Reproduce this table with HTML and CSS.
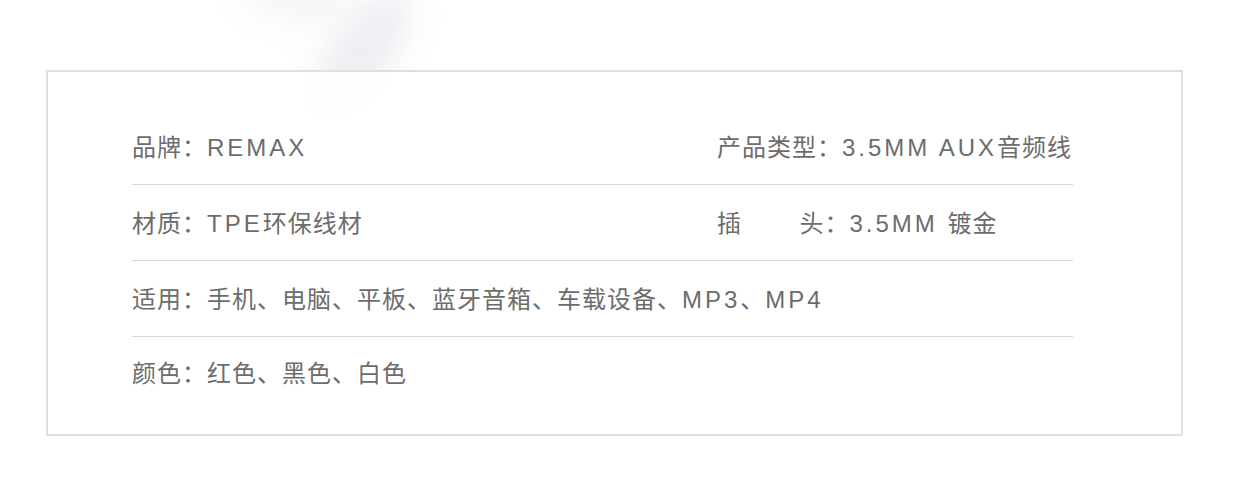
FILE: index.html
```html
<html>

<head>
  <meta charset="utf-8">
  <title>产品参数</title>
  <link rel="stylesheet" href="styles.css">
</head>

<body>
  <div class="smudge"></div>
  <div class="smudge two"></div>
  <div class="page">
    <div class="box">
      <div class="row split">
        <div>品牌：<span class="en">REMAX</span></div>
        <div>产品类型：<span class="en">3.5MM AUX</span>音频线</div>
      </div>
      <div class="row split">
        <div>材质：<span class="en">TPE</span>环保线材</div>
        <div><span class="wide">插　　</span>头：<span class="en">3.5MM </span>镀金</div>
      </div>
      <div class="row">
        <div>适用：手机、电脑、平板、蓝牙音箱、车载设备、<span class="en">MP3</span>、<span class="en">MP4</span></div>
      </div>
      <div class="row last">
        <div>颜色：红色、黑色、白色</div>
      </div>
    </div>
  </div>
</body>

</html>
```

FILE: styles.css
```css
body {
  margin: 0;
  background: #ffffff;
  font-family: "Liberation Sans", "Noto Sans CJK SC", sans-serif;
  color: #6c6c6c;
  overflow: hidden;
}

.smudge {
  position: absolute;
  left: 330px;
  top: -20px;
  width: 60px;
  height: 150px;
  background: #e2e2ea;
  border-radius: 50%;
  transform: rotate(35deg);
  filter: blur(16px);
  opacity: 0.6;
}

.smudge.two {
  left: 240px;
  top: -30px;
  width: 110px;
  height: 50px;
  transform: rotate(10deg);
  opacity: 0.35;
}

.page {
  position: relative;
  padding: 70px 57px 0 46px;
}

.box {
  border: 2px solid #e1dfdc;
  padding: 37px 108px 28px 84px;
  background: rgba(255, 255, 255, 0.85);
}

.row {
  box-sizing: border-box;
  height: 76px;
  padding-bottom: 3px;
  display: grid;
  align-items: center;
  border-bottom: 1px solid #d9d9d9;
  font-size: 24px;
  letter-spacing: 1px;
  white-space: nowrap;
}

.row.split {
  grid-template-columns: 585px 1fr;
}

.row.last {
  height: 69px;
  padding-bottom: 0;
  border-bottom: none;
}

.en {
  letter-spacing: 3px;
}

.wide {
  letter-spacing: 3.5px;
}
```
